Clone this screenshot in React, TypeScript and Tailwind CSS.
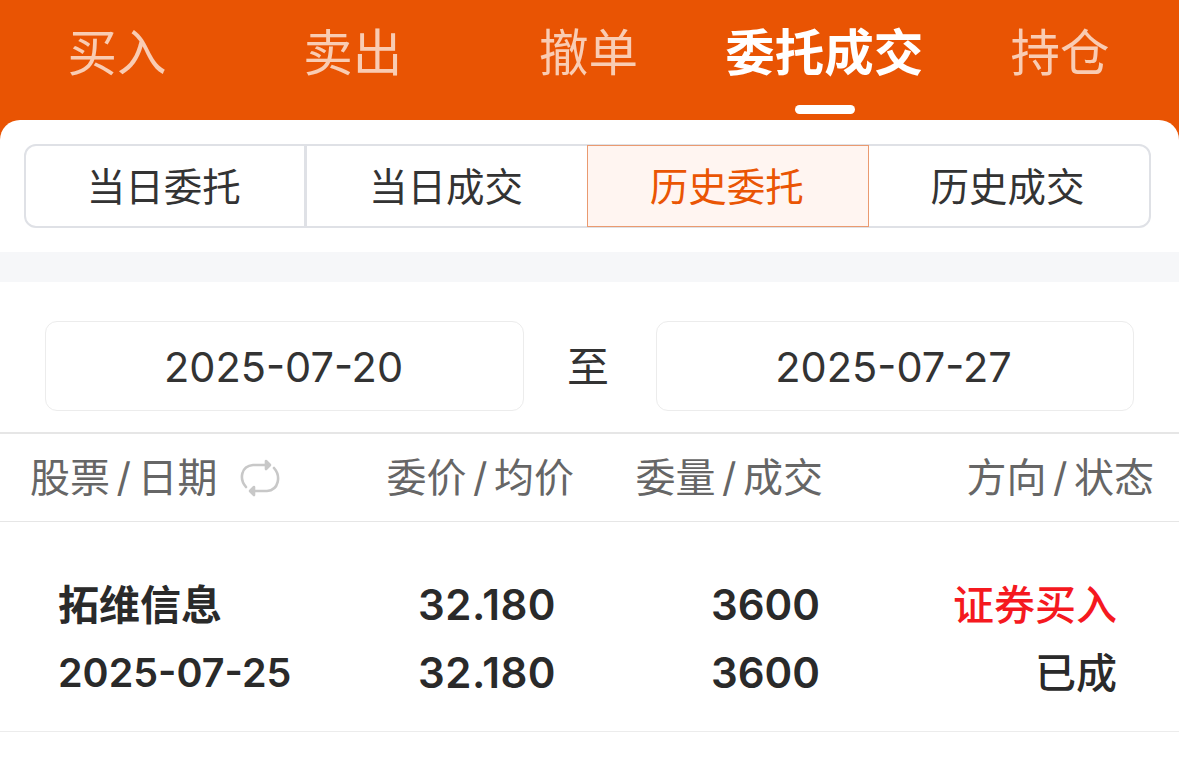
const font = { fontFamily: '"Inter", "Noto Sans CJK SC", sans-serif' };

function SyncIcon() {
  return (
    <svg width="42" height="38" viewBox="0 0 42 38" fill="none" stroke="#c8c8c8" strokeWidth="2.6" strokeLinecap="round" strokeLinejoin="round" className="ml-[22px]">
      <path d="M7 28 C0 20 2 7 14 6 L27 6" />
      <path d="M27 2 L31 6 L27 10 Z" fill="#c8c8c8" />
      <path d="M35 9 C42 17 40 31 28 32 L15 32" />
      <path d="M15 28 L11 32 L15 36 Z" fill="#c8c8c8" />
    </svg>
  );
}

function Head({ a, b }: { a: string; b: string }) {
  return (
    <>
      {a}
      <span className="mx-[6.5px]">/</span>
      {b}
    </>
  );
}

export default function App() {
  const tabs = ["买入", "卖出", "撤单", "委托成交", "持仓"];
  const segs = ["当日委托", "当日成交", "历史委托", "历史成交"];
  return (
    <div className="w-[1179px] h-[763px] overflow-hidden bg-white" style={font}>
      <div className="h-[140px] bg-[#e95403] grid grid-cols-5 -mb-[20px]">
        {tabs.map((t, i) => (
          <div key={t} className="relative h-[120px] flex justify-center">
            <span className={`text-[49.5px] leading-[107px] whitespace-nowrap -translate-x-[1px] ${i === 3 ? "font-semibold text-white" : "text-white/70"}`}>{t}</span>
            {i === 3 && <div className="absolute top-[105px] w-[60px] h-[9px] rounded-full bg-white" />}
          </div>
        ))}
      </div>
      <div className="relative rounded-t-[20px] bg-white">
        <div className="p-[24px]">
          <div className="h-[84px] w-[1127px] grid grid-cols-4 rounded-[12px] border-2 border-[#dfe1e6]">
            {segs.map((s, i) => (
              <div key={s} className={`flex items-center justify-center text-[38.5px] pt-[3px] pr-[2px] ${i === 2 ? "bg-[#fff5f1] text-[#ea5504] outline-1 outline-[#ea9a70]" : "text-[#333]"} ${i === 0 ? "border-r-[3px] border-[#dfe1e6]" : ""}`}>
                {s}
              </div>
            ))}
          </div>
        </div>
        <div className="h-[30px] bg-[#f6f7f9]" />
        <div className="flex items-center px-[45px] pt-[39px] pb-[21px]">
          <div className="w-[479px] h-[90px] pt-[2px] pr-[2px] flex items-center justify-center rounded-[12px] border border-[#ececec] text-[41.5px] text-[#333]">2025-07-20</div>
          <div className="flex-1 text-center text-[42px] text-[#333] -translate-x-[2px]">至</div>
          <div className="w-[478px] h-[90px] pt-[2px] pr-[3px] flex items-center justify-center rounded-[12px] border border-[#ececec] text-[41.5px] text-[#333]">2025-07-27</div>
        </div>
        <div className="h-[90px] border-t-2 border-b border-[#e6e6e6] flex items-center text-[40px] text-[#666]">
          <div className="w-[355px] pl-[30px] flex items-center whitespace-nowrap"><Head a="股票" b="日期" /><SyncIcon /></div>
          <div className="w-[219px] text-right whitespace-nowrap"><Head a="委价" b="均价" /></div>
          <div className="w-[249px] text-right whitespace-nowrap"><Head a="委量" b="成交" /></div>
          <div className="w-[331px] text-right whitespace-nowrap"><Head a="方向" b="状态" /></div>
        </div>
        <div className="h-[210px] border-b border-[#ececec] flex items-center pt-[24px] text-[42px] font-semibold text-[#2a2a2a]">
          <div className="w-[355px] pl-[58px]">
            <div className="leading-[68px] text-[41px]">拓维信息</div>
            <div className="leading-[68px] text-[39.5px]">2025-07-25</div>
          </div>
          <div className="w-[201px] text-right tracking-[0.5px]">
            <div className="leading-[68px]">32.180</div>
            <div className="leading-[68px]">32.180</div>
          </div>
          <div className="w-[264px] text-right">
            <div className="leading-[68px]">3600</div>
            <div className="leading-[68px]">3600</div>
          </div>
          <div className="w-[297px] text-right text-[41px] font-medium">
            <div className="leading-[68px] text-[#f5191f]">证券买入</div>
            <div className="leading-[68px]">已成</div>
          </div>
        </div>
      </div>
    </div>
  );
}
